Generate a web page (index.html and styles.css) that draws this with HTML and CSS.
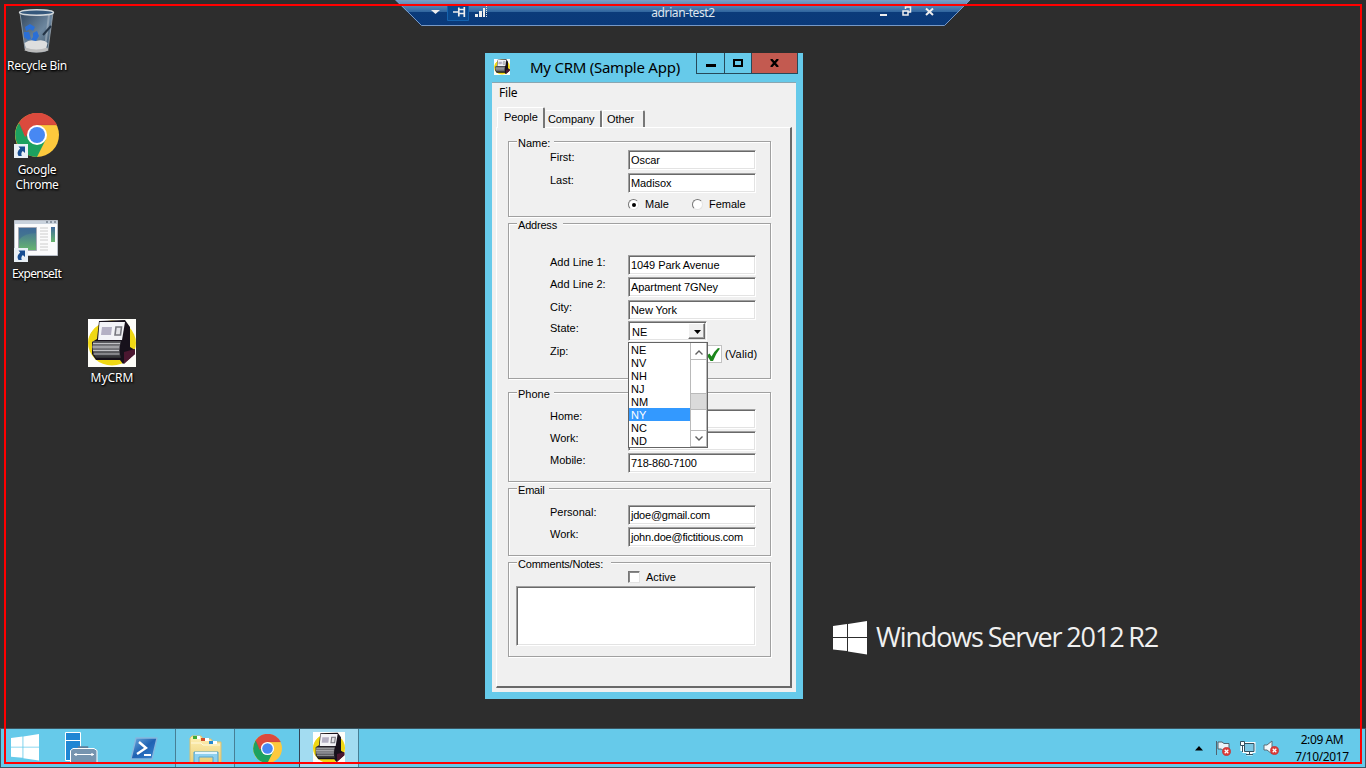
FILE: index.html
```html
<!DOCTYPE html>
<html lang="en">
<head>
<meta charset="utf-8">
<title>adrian-test2</title>
<link rel="stylesheet" href="styles.css">
</head>
<body>
<svg width="0" height="0" class="defs" aria-hidden="true">
  <defs>
    <linearGradient id="glass" x1="0" y1="0" x2="1" y2="1"><stop offset="0" stop-color="#32465d"/><stop offset=".55" stop-color="#6d879f"/><stop offset="1" stop-color="#364c61"/></linearGradient>
    <linearGradient id="photo" x1="0" y1="0" x2="0" y2="1"><stop offset="0" stop-color="#40699d"/><stop offset="1" stop-color="#67b66e"/></linearGradient>
    <linearGradient id="conn" x1="0" y1="0" x2="0" y2="1"><stop offset="0" stop-color="#7c9fc6"/><stop offset=".47" stop-color="#2f659e"/><stop offset=".48" stop-color="#0b3b7a"/><stop offset="1" stop-color="#0a3979"/></linearGradient>
    <linearGradient id="ps" x1="0" y1="0" x2="1" y2="1"><stop offset="0" stop-color="#72aee0"/><stop offset=".5" stop-color="#1f62b3"/><stop offset="1" stop-color="#3b87d2"/></linearGradient>
    <linearGradient id="folder" x1="0" y1="0" x2="0" y2="1"><stop offset="0" stop-color="#fff0b4"/><stop offset="1" stop-color="#e9cf79"/></linearGradient>
    <linearGradient id="drum" x1="0" y1="0" x2="0" y2="1"><stop offset="0" stop-color="#4a4a4e"/><stop offset=".35" stop-color="#85858a"/><stop offset="1" stop-color="#2a2a2e"/></linearGradient>
    <symbol id="chrome" viewBox="0 0 44 44">
      <circle cx="22" cy="22" r="22" fill="#fdc93d"/>
      <path d="M22 22 4 10A22 22 0 0 0 22 44L31 26Z" fill="#1da160"/>
      <path d="M4 9.500A22 22 0 0 1 42 12H22L10 24Z" fill="#db4a3d"/>
      <path d="M3.700 10.200 13 26 22 12H42" fill="none" stroke="#9e3428" stroke-opacity=".35" stroke-width=".7"/>
      <circle cx="22" cy="22" r="10" fill="#fff"/><circle cx="22" cy="22" r="8" fill="#4788f3"/>
    </symbol>
    <symbol id="crm" viewBox="0 0 48 48">
      <path fill="#fdfdf8" d="M0 0h48v48H0z"/>
      <ellipse cx="24" cy="24" rx="24" ry="22.500" fill="#f0d814"/>
      <path d="M0 0H20Q4 8 0 19Z" fill="#fff"/>
      <path d="M11 2 37 1 42 8V28L47 31V35L35 45 32 41H8L4 35V23L9 20Z" fill="#17111b"/>
      <path d="M11.500 3H37L34 21H10Z" fill="#f3f3f7"/>
      <path d="M14 8h10l-1 8H13z" fill="#b4b0c4"/>
      <path d="M28 8h5.500l-1 8H27z" fill="#e4e4e8" stroke="#77777f" stroke-width="1.600"/>
      <path d="M5 22H33Q30 32 33 39H8Q3 32 5 22Z" fill="url(#drum)"/>
      <path d="M5 24.500h27M4.500 28h26.500M5 31.500h26M5.500 35h26" stroke="#c0c0c4" stroke-width="1"/>
      <path d="M36 33 47 30V35L36 45Z" fill="#4b1730"/>
    </symbol>
    <symbol id="shortcut" viewBox="0 0 14 14">
      <path fill="#e9f0f6" d="M0 0h14v14H0z"/>
      <path d="M4.500 2.500H11V9L8.800 7Q6.500 9 7.800 12H4.500Q2 8 6.200 4.500Z" fill="#174d92"/>
    </symbol>
    <symbol id="win" viewBox="0 0 34 34">
      <path d="M0 5 14 3V16H0ZM15 3 34 0V16H15ZM0 17H14V30L0 28.500ZM15 17H34V33.500L15 30.500Z"/>
    </symbol>
    <symbol id="stop" viewBox="0 0 10 10"><circle cx="5" cy="5" r="4.700" fill="#db3b37" stroke="#b72d2e" stroke-width=".5"/><path d="m3 3 4 4M7 3 3 7" stroke="#fff" stroke-width="1.400"/></symbol>
  </defs>
</svg>

<main class="desktop">
  <div class="icon recycle">
    <svg width="40" height="48" viewBox="0 0 40 48">
      <path d="M3 5 8 41Q9 44 20 44T31 41L36 5Z" fill="url(#glass)" stroke="#9ba7b3" stroke-width=".8"/>
      <path d="M32 7 28 40" stroke="#b4c0ca" stroke-width="2" opacity=".5"/>
      <path d="M7.500 35Q13 31 19 33Q27 31 30.500 35L29 41Q20 44 9 41Z" fill="#dedede"/>
      <path d="M8 41Q19 45 31 41" stroke="#bbb" stroke-width="3" fill="none"/>
      <ellipse cx="19.500" cy="4.500" rx="17" ry="2.800" fill="#35587c" stroke="#d2d8dc" stroke-width="1.400"/>
      <path d="m8 19 5-3 5 3-2 4-3-2-4 2ZM7 24l5 0 2 7-3 1-4-3ZM16 25l4-2 2 5-3 5-5-1 2-3Z" fill="#2b6fd6"/>
      <path d="m26 27 8-9" stroke="#243446" stroke-width="2"/>
    </svg>
    <span class="caption">Recycle Bin</span>
  </div>
  <div class="icon gchrome">
    <div class="art"><svg width="44" height="44"><use href="#chrome"/></svg><svg class="link" width="14" height="14"><use href="#shortcut"/></svg></div>
    <span class="caption">Google<br>Chrome</span>
  </div>
  <div class="icon expense">
    <div class="art"><svg width="44" height="36" viewBox="0 0 44 36">
      <path d="M.5.500h43v35H.5z" fill="#fbfbfc" stroke="#b8bec8"/><path d="M1 1h42v3H1z" fill="#c9d2dd"/>
      <path d="M32 2h2M36 2h2M40 2h2" stroke="#4b5667"/>
      <path d="M4.500 7.500h18v23h-18z" fill="url(#photo)" stroke="#a3a8b4"/>
      <path d="M5 20Q10 13 22 13V8H5Z" fill="#3c6994" opacity=".6"/>
      <path d="M26 8h8M26 11h8M26 14h8M26 17h8M26 20h8M26 24h8M26 27h8M26 30h8" stroke="#ccc"/>
      <path d="M37 7h4v15h-4z" fill="url(#photo)"/></svg><svg class="link low" width="14" height="14"><use href="#shortcut"/></svg></div>
    <span class="caption">ExpenseIt</span>
  </div>
  <div class="icon mycrm"><svg width="48" height="48"><use href="#crm"/></svg><span class="caption">MyCRM</span></div>

  <div class="brand"><svg width="34" height="34" fill="#fff"><use href="#win"/></svg><span>Windows Server 2012 R2</span></div>

  <header class="connection">
    <svg class="shape" width="576" height="27" viewBox="0 0 576 27">
      <path d="M0 0H575L550 25.500H26Z" fill="url(#conn)"/><path d="M1 0 26.500 25.500H549.500L575 0" fill="none" stroke="#7698c6"/>
      <path d="M52.500 4.500h21v16h-21z" fill="#0b478b" stroke="#1563ae"/>
      <path d="M36 10h9l-4.500 4z" fill="#eee"/>
      <path d="M58 12h5M63.800 7.500v9M64 9.500h5M64 13.500h5M69.300 7v10" stroke="#eee" stroke-width="1.700"/>
      <path d="M80 14h3v3h-3zM84 11h3v6h-3zM88 8h2v9h-2z" fill="#eee"/><path d="M91.500 6v11" stroke="#ddd" stroke-dasharray="1 1"/>
      <path d="M485 14h7v2h-7z" fill="#eee"/>
      <path d="M508 11h5v4h-5zM510.500 9V7h5v5h-2" fill="none" stroke="#eee" stroke-width="1.500"/>
      <path d="m531 8.500 7 6.500M538 8.500l-7 6.500" stroke="#eee" stroke-width="2"/>
    </svg>
    <span class="host">adrian-test2</span>
  </header>

  <section class="window">
    <div class="titlebar">
      <svg class="appicon" width="16" height="16"><use href="#crm"/></svg>
      <h1>My CRM (Sample App)</h1>
      <div class="controls">
        <span class="ctl min"><svg width="10" height="10"><path d="M0 6h10v3H0z"/></svg></span>
        <span class="ctl max"><svg width="10" height="8"><path d="M1 1h8v6H1z" fill="none" stroke="#000" stroke-width="2"/></svg></span>
        <span class="ctl close"><svg width="9" height="8"><path d="m1 0 7 8M8 0 1 8" stroke="#000" stroke-width="2.300"/></svg></span>
      </div>
    </div>
    <div class="client">
      <nav class="menu">File</nav>
      <div class="tabs"><span class="tab on">People</span><span class="tab company">Company</span><span class="tab other">Other</span></div>
      <div class="page">
        <div class="group name"><span class="legend">Name:</span>
          <label>First:</label><span class="field">Oscar</span>
          <label>Last:</label><span class="field">Madisox</span>
          <div class="radios"><i class="radio checked"></i><span class="male">Male</span><i class="radio"></i><span>Female</span></div>
        </div>
        <div class="group address"><span class="legend">Address</span>
          <label>Add Line 1:</label><span class="field">1049 Park Avenue</span>
          <label>Add Line 2:</label><span class="field">Apartment 7GNey</span>
          <label>City:</label><span class="field">New York</span>
          <label>State:</label>
          <div class="combo"><span>NE</span><b><svg width="7" height="4"><path d="M0 0h7L3.500 4z"/></svg></b>
            <div class="list">
              <ul><li>NE</li><li>NV</li><li>NH</li><li>NJ</li><li>NM</li><li class="hot">NY</li><li>NC</li><li>ND</li></ul>
              <div class="scroll"><i><svg width="8" height="5"><path d="m.5 4.500 3.500-3.500 3.500 3.500"/></svg></i><em></em><i class="down"><svg width="8" height="5"><path d="m.5.500 3.500 3.500 3.500-3.500"/></svg></i></div>
            </div>
          </div>
          <label>Zip:</label>
          <div class="valid"><i><svg width="13" height="14" viewBox="0 0 13 14"><path d="M0 7.500 2.500 5.500 4.500 8.500Q7.500 3 11 0L13 .500Q8.500 6 6 13H3.500Z" fill="#1b861b"/></svg></i><span>(Valid)</span></div>
        </div>
        <div class="group phone"><span class="legend">Phone</span>
          <label>Home:</label><span class="field"></span>
          <label>Work:</label><span class="field"></span>
          <label>Mobile:</label><span class="field num">718-860-7100</span>
        </div>
        <div class="group email"><span class="legend">Email</span>
          <label>Personal:</label><span class="field">jdoe@gmail.com</span>
          <label>Work:</label><span class="field">john.doe@fictitious.com</span>
        </div>
        <div class="group notes"><span class="legend">Comments/Notes:</span>
          <div class="active"><i></i><span>Active</span></div>
          <div class="memo"></div>
        </div>
      </div>
    </div>
  </section>

  <footer class="taskbar">
    <span class="task start"><svg width="28" height="27" viewBox="0 0 34 34" preserveAspectRatio="none" fill="#fff"><path d="M0 5 14 3V16H0ZM15 3 34 0V16H15ZM0 17H14V30L0 28.500ZM15 17H34V33.500L15 30.500Z"/></svg></span>
    <span class="task server"><svg width="33" height="32" viewBox="0 0 33 32">
      <path d="M.5.500h15v28H.5z" fill="#1f86d4" stroke="#fff"/><path d="M1 8.500h14" stroke="#fff"/>
      <path d="M14 18v-2.500h8V18" fill="none" stroke="#5f7d99" stroke-width="2.500"/>
      <path d="M5.500 18.500 8 16.500H29l3 2V31H5.500z" fill="#7694af" stroke="#fff"/><path d="M9 22.500h20" stroke="#fff"/><circle cx="11" cy="22.500" r="1.300" fill="#fff"/><circle cx="27" cy="22.500" r="1.300" fill="#fff"/></svg></span>
    <span class="task shell"><svg width="28" height="24" viewBox="0 0 28 24"><path d="M6 1H27L22 22H1Z" fill="url(#ps)" stroke="#86b6de" stroke-width="1.300" stroke-linejoin="round"/><path d="m9 5 7 6-9 6" fill="none" stroke="#fff" stroke-width="2.400"/><path d="M14 18h7" stroke="#fff" stroke-width="2"/></svg></span>
    <span class="task files"><svg width="34" height="28" viewBox="0 0 34 28">
      <path d="M1 3 3 1h9l2 3h8l2 3h8v21H1z" fill="url(#folder)" stroke="#dcc070"/>
      <path d="M4 1h4v3H4z" fill="#3fab37"/><path d="M8 1h3v3H8zM16 3h4v3h-4zM24 6h4v3h-4z" fill="#fff"/><path d="M12 3h4v3h-4z" fill="#d2502b"/><path d="M20 6h4v3h-4z" fill="#2788d1"/>
      <path d="M2 8h10l2 2h17" stroke="#fff9dc" fill="none"/>
      <path d="M5 28V17h24v11h-5v-6H10v6Z" fill="#8fd0ee" stroke="#52a4cf"/><path d="M6 18h22" stroke="#e4f6ff" stroke-width="2"/></svg></span>
    <span class="task web"><svg width="29" height="29"><use href="#chrome"/></svg></span>
    <span class="task crmtask"><svg width="32" height="30" viewBox="0 0 48 45" preserveAspectRatio="none"><use href="#crm" width="48" height="48"/></svg></span>
    <div class="tray">
      <svg width="8" height="5"><path d="M0 4.500 4 0l4 4.500z"/></svg>
      <svg width="17" height="17" viewBox="0 0 17 17"><path d="M1.500 1v14M3 2h4l2 1.500h5v7H8L6.500 9H3z" fill="#eaf3f8" stroke="#53636d"/><use href="#stop" x="7" y="7" width="9" height="9"/></svg>
      <svg width="17" height="16" viewBox="0 0 17 16"><path d="M5 3.500h10v8H5zM7.500 14h6M10.500 12v2M3 3v8" fill="none" stroke="#fff" stroke-width="3"/><path d="M5.500 3.500h9.500v8H5.500zM7 14.500h7M10.500 12v2" fill="#7cc8e4" stroke="#34505e"/><path d="M1.500 1.500h4v4h-4zM3.500 6v6" fill="#fff" stroke="#34505e"/></svg>
      <svg width="17" height="16" viewBox="0 0 17 16"><path d="M1 5h3l5-4v13l-5-4H1z" fill="#f4f8fa" stroke="#5d6d76"/><use href="#stop" x="7" y="6" width="9" height="9"/></svg>
      <div class="clock"><span>2:09 AM</span><span>7/10/2017</span></div>
    </div>
  </footer>
  <div class="frame"></div>
</main>
</body>
</html>
```
FILE: styles.css
```css
* { box-sizing: border-box; }
html, body { margin: 0; }
svg { display: block; flex: none; }
i, em, b { font-style: normal; font-weight: normal; }
.defs { position: absolute; }
.desktop { position: relative; width: 1366px; height: 768px; overflow: hidden; background: #2d2d2d; font-family: "Noto Sans", sans-serif; }
.frame { position: absolute; inset: 4px; border: 2px solid #f00; z-index: 9; }

/* desktop icons */
.icon { position: absolute; display: flex; flex-direction: column; align-items: center; width: 76px; }
.caption { color: #fff; font-size: 12px; line-height: 15px; text-align: center; white-space: nowrap; text-shadow: 1px 1px 2px #000, 0 1px 2px #000; letter-spacing: -.3px; }
.art { position: relative; }
.link { position: absolute; left: -1px; bottom: -1px; }
.link.low { left: 0; bottom: -6px; }
.recycle { left: -1px; top: 8px; gap: 2px; }
.gchrome { left: -1px; top: 113px; gap: 5px; }
.expense { left: -2px; top: 220px; gap: 10px; }
.expense .caption { letter-spacing: -.7px; padding-left: 1px; }
.mycrm { left: 74px; top: 319px; gap: 3px; }
.mycrm .caption { letter-spacing: 0; }

.brand { position: absolute; left: 833px; top: 621px; display: flex; align-items: center; gap: 9px; height: 34px; color: #f0f0f0; font: 400 27px/32px "Open Sans", sans-serif; letter-spacing: -1.15px; word-spacing: -1px; white-space: nowrap; }
.brand span { padding-bottom: 2px; }

/* remote connection bar */
.connection { position: absolute; left: 395px; top: 0; width: 576px; height: 27px; display: flex; justify-content: center; }
.shape { position: absolute; inset: 0; }
.host { position: relative; color: #dfe6ee; font-size: 12px; line-height: 26px; letter-spacing: -.4px; }

/* application window */
.window { position: absolute; left: 485px; top: 53px; width: 318px; height: 646px; padding: 0 7px 7px; background: #66caea; display: flex; flex-direction: column; }
.titlebar { height: 29px; display: flex; align-items: flex-start; }
.appicon { margin: 6px 0 0 2px; }
h1 { margin: 0 0 0 20px; width: 156px; font-size: 15px; line-height: 29px; font-weight: 400; white-space: nowrap; letter-spacing: -.25px; }
.controls { display: flex; height: 21px; margin: 0 -2px 0 11px; border: 1px solid #26495a; border-top: 0; flex: none; }
.ctl { display: flex; align-items: center; justify-content: center; }
.ctl + .ctl { border-left: 1px solid #26495a; }
.min { width: 27px; }
.max { width: 27px; }
.close { width: 46px; background: #c35a50; }
.client { flex: 1; border-top: 1px solid #8aa6b1; background: #f0f0f0; font: 11px/13px "Liberation Sans", sans-serif; color: #000; padding: 3px 4px 4px; display: flex; flex-direction: column; }
.menu { height: 22px; padding-left: 3px; font: 12px/14px "Noto Sans", sans-serif; letter-spacing: -.2px; }
.tabs { height: 19px; display: flex; align-items: flex-end; padding-left: 1px; letter-spacing: -.1px; }
.tab { height: 17px; padding: 2px 0 0 3px; border-top: 1px solid #fff; border-right: 2px solid #777; border-radius: 2px 2px 0 0; }
.tab.on { position: relative; z-index: 1; width: 48px; height: 21px; margin-bottom: -1px; padding: 3px 0 0 6px; border-left: 1px solid #fff; background: #f0f0f0; }
.company { width: 57px; }
.other { width: 43px; padding-left: 4px; border-left: 1px solid #fff; }
.page { flex: 1; border: 1px solid #fff; border-right: 2px solid #696969; border-bottom: 2px solid #696969; padding: 13px 19px 0 11px; display: flex; flex-direction: column; }

/* group boxes: a caption column and a field column */
.group { position: relative; flex: none; width: 263px; border: 1px solid #a0a0a0; box-shadow: 1px 1px #fff, inset 1px 1px #fff; display: grid; grid-template-columns: 78px 128px; align-content: start; padding-left: 41px; white-space: nowrap; }
.legend { position: absolute; left: 8px; top: -6px; padding: 1px 0 0 1px; height: 14px; background: #f0f0f0; }
label { padding-top: 1px; }
.name { height: 76px; padding-top: 8px; grid-template-rows: 23px 23px 17px; }
.name .legend { width: 37px; }
.address { height: 156px; margin-top: 6px; padding-top: 31px; grid-template-rows: 22px 23px 21px 23px 20px; }
.address .legend { width: 46px; letter-spacing: -.2px; }
.phone { height: 90px; margin-top: 13px; padding-top: 16px; grid-template-rows: 22px 22px 20px; }
.phone .legend { width: 37px; }
.email { height: 68px; margin-top: 6px; padding-top: 16px; grid-template-rows: 22px 20px; }
.email .legend { width: 32px; letter-spacing: -.2px; }
.notes { height: 95px; margin-top: 6px; padding: 7px 0 0 7px; display: flex; flex-direction: column; }
.notes .legend { width: 94px; letter-spacing: -.2px; }
.field, .memo, .combo { height: 20px; background: #fff; border: 1px solid; border-color: #a0a0a0 #fff #fff #a0a0a0; box-shadow: inset 1px 1px #696969, inset -1px -1px #e3e3e3; }
.field { padding: 3px 2px; letter-spacing: -.08px; }
.num { letter-spacing: -.25px; }
.email .field { letter-spacing: -.22px; }
.radios { grid-column: 2; display: flex; align-items: center; height: 17px; }
.radio { width: 11px; height: 11px; border-radius: 50%; background: #fff; border: 1px solid; border-color: #777 #e3e3e3 #e3e3e3 #777; display: flex; }
.checked::after { content: ""; width: 4px; height: 4px; margin: auto; border-radius: 50%; background: #000; }
.radio + span { margin-left: 6px; }
.male { width: 47px; }
.combo { position: relative; width: 79px; padding: 2px; display: flex; line-height: 15px; }
.combo > span { flex: 1; padding: 1px; }
.combo > b { width: 17px; height: 16px; margin: -1px -1px 0 0; background: #f0f0f0; border: 1px solid; border-color: #fff #696969 #696969 #fff; box-shadow: inset -1px -1px #a0a0a0; display: flex; align-items: center; justify-content: center; padding: 1px 0 0 1px; }
.list { position: absolute; left: -1px; top: 20px; width: 80px; height: 106px; z-index: 2; border: 1px solid #646464; background: #fff; display: flex; line-height: 13px; }
ul { list-style: none; margin: 0; padding: 0; width: 61px; }
li { height: 13px; padding-left: 2px; line-height: 14px; }
.hot { background: #3399ff; color: #fff; }
.scroll { width: 17px; border: 1px solid #bababa; border-width: 0 1px; display: flex; flex-direction: column; }
.scroll i { height: 17px; border-bottom: 1px solid #bababa; display: flex; align-items: center; justify-content: center; padding-top: 2px; }
.scroll em { height: 17px; margin: 33px 0 20px; background: #dadada; border: 1px solid #bababa; border-width: 1px 0; }
.scroll i.down { border-top: 1px solid #bababa; padding-top: 0; }
.scroll path { fill: none; stroke: #606060; stroke-width: 1.4; }
.valid { display: flex; align-items: center; margin-left: 77px; gap: 3px; letter-spacing: .2px; }
.valid i { width: 17px; height: 18px; padding: 2px 1px; background: #fff; border: 1px solid #c2c2c2; }
.active { display: flex; align-items: center; gap: 5px; height: 14px; margin-left: 112px; }
.active i { width: 12px; height: 12px; margin: 0 1px 1px 0; background: #fff; border: 1px solid; border-color: #777 #e3e3e3 #e3e3e3 #777; box-shadow: inset 1px 1px #888; }
.memo { width: 240px; height: 60px; margin-top: 2px; }

/* taskbar */
.taskbar { position: absolute; left: 0; bottom: 0; width: 1366px; height: 40px; border: 1px solid #3b5662; background: #66caea; display: flex; }
.task { display: flex; flex: none; padding-top: 5px; }
.start { width: 64px; padding-left: 10px; }
.server { width: 66px; padding: 3px 0 0; }
.shell { width: 44px; padding-top: 8px; margin-left: -1px; padding-right: 1px; }
.shell + .files { margin-left: 1px; }
.files, .web, .crmtask { justify-content: center; border-left: 1px solid #477f95; }
.files { width: 59px; padding: 6px 0 0 1px; background: #72ceec; }
.web { width: 65px; }
.crmtask { width: 60px; padding-top: 3px; background: #a3dcf1; border-right: 1px solid #477f95; border-left-color: #345; }
.tray { margin-left: auto; display: flex; align-items: center; gap: 7px; padding-right: 12px; }
.tray > svg:first-child { margin-right: 5px; }
.clock { width: 62px; margin-left: 4px; display: flex; flex-direction: column; align-items: center; font-size: 12px; line-height: 17px; letter-spacing: -.4px; white-space: nowrap; }
```
